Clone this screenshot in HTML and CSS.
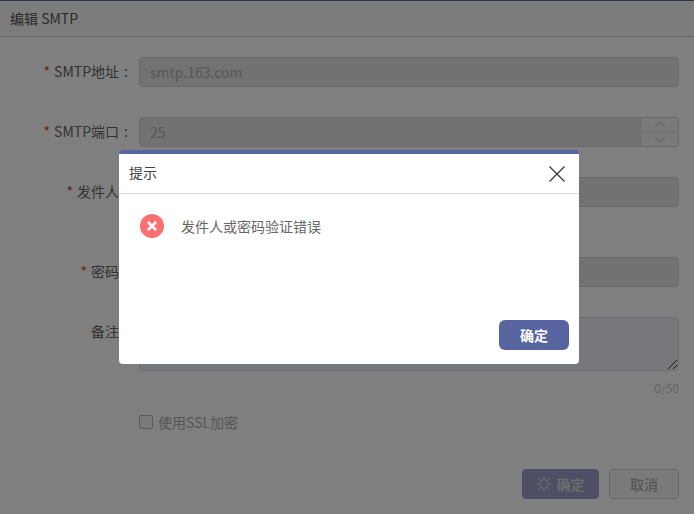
FILE: index.html
```html
<!DOCTYPE html>
<html lang="zh-CN">
<head>
    <meta charset="UTF-8">
    <title>编辑 SMTP</title>
    <link rel="stylesheet" href="styles.css">
</head>
<body>
    <div class="page">
        <div class="page-header">编辑 SMTP</div>
        <div class="form">
            <div class="row">
                <label class="label"><i>*</i>SMTP地址<b>:</b></label>
                <div class="input">smtp.163.com</div>
            </div>
            <div class="row">
                <label class="label"><i>*</i>SMTP端口<b>:</b></label>
                <div class="input number">25
                    <div class="spin">
                        <span><svg width="12" height="7" viewBox="0 0 12 7"><path d="M1 6l5-5 5 5" fill="none" stroke="#c4c4c4" stroke-width="1"/></svg></span>
                        <span><svg width="12" height="7" viewBox="0 0 12 7"><path d="M1 1l5 5 5-5" fill="none" stroke="#c4c4c4" stroke-width="1"/></svg></span>
                    </div>
                </div>
            </div>
            <div class="row">
                <label class="label"><i>*</i>发件人<b>:</b></label>
                <div class="input"></div>
            </div>
            <div class="row tall">
                <label class="label"><i>*</i>密码<b>:</b></label>
                <div class="input"></div>
            </div>
            <div class="row">
                <label class="label">备注<b>:</b></label>
                <div class="textarea">
                    <svg class="grip" width="9" height="9" viewBox="0 0 9 9"><path d="M0 9L9 0M5 9l4-4" fill="none" stroke="#333" stroke-width="1"/></svg>
                </div>
            </div>
            <div class="count">0/50</div>
            <div class="check"><span class="box"></span>使用SSL加密</div>
            <div class="actions">
                <button class="btn primary">
                    <svg width="14" height="14" viewBox="0 0 14 14"><path d="M7 0v4M7 10v4M0 7h4M10 7h4M2 2l3 3M9 9l3 3M12 2L9 5M5 9l-3 3" fill="none" stroke="#e0e0e0" stroke-width="1.2"/></svg>
                    确定
                </button>
                <button class="btn">取消</button>
            </div>
        </div>
    </div>

    <div class="mask"></div>

    <div class="dialog">
        <div class="dialog-header">
            <span class="dialog-title">提示</span>
            <svg width="16" height="16" viewBox="0 0 16 16"><path d="M.5.5l15 15M15.5.5l-15 15" fill="none" stroke="#333" stroke-width="1.2"/></svg>
        </div>
        <div class="dialog-body">
            <svg width="24" height="24" viewBox="0 0 24 24"><circle cx="12" cy="12" r="12" fill="#fa7070"/><path d="M8 8l8 8M16 8l-8 8" fill="none" stroke="#fff" stroke-width="2.6"/></svg>
            <span>发件人或密码验证错误</span>
        </div>
        <div class="dialog-footer">
            <button class="ok">确定</button>
        </div>
    </div>
</body>
</html>
```

FILE: styles.css
```css
* {
    box-sizing: border-box;
}
body {
    margin: 0;
    height: 514px;
    overflow: hidden;
    background-color: #fff;
    font-family: "Noto Sans CJK SC", "Noto Sans", sans-serif;
    font-size: 14px;
    color: #666;
}
.page-header {
    height: 37px;
    padding-left: 10px;
    line-height: 35px;
    border-top: 1px solid #5a669f;
    border-bottom: 1px solid #ccc;
    background-color: #f8f8f8;
    color: #555;
}
.form {
    padding: 20px 15px 0 0;
}
.row {
    display: flex;
    margin-bottom: 30px;
}
.row.tall {
    margin-top: 50px;
}
.label {
    width: 139px;
    flex-shrink: 0;
    line-height: 29px;
    text-align: right;
    color: #666;
}
.label i {
    margin-right: 4px;
    color: #e04040;
    font-style: normal;
}
.label b {
    display: inline-block;
    width: 20px;
    padding-left: 5px;
    text-align: left;
    font-weight: normal;
}
.input {
    position: relative;
    flex: 1;
    height: 30px;
    padding-left: 10px;
    line-height: 29px;
    border: 1px solid #d4d4d4;
    border-radius: 4px;
    background-color: #e4e4e4;
    color: #b0b0b0;
}
.spin {
    position: absolute;
    top: 0;
    right: 0;
    bottom: 0;
    width: 36px;
    display: flex;
    flex-direction: column;
    background-color: #f2f2f2;
    border-radius: 0 4px 4px 0;
}
.spin span {
    flex: 1;
    display: flex;
    align-items: center;
    justify-content: center;
}
.spin span:first-child {
    border-bottom: 1px solid #ddd;
}
.textarea {
    position: relative;
    flex: 1;
    height: 54px;
    border: 1px solid #ddd;
    border-radius: 4px;
    background-color: #eceef4;
}
.grip {
    position: absolute;
    right: 1px;
    bottom: 1px;
}
.count {
    margin-top: -21px;
    text-align: right;
    font-size: 12px;
    line-height: 16px;
    color: #c8c8c8;
}
.check {
    display: flex;
    align-items: center;
    margin: 16px 0 0 139px;
    line-height: 20px;
    color: #aaa;
}
.box {
    width: 14px;
    height: 14px;
    margin-right: 5px;
    border: 1px solid #b4b4b4;
    border-radius: 2px;
    background-color: #f4f4f4;
}
.actions {
    display: flex;
    justify-content: flex-end;
    gap: 10px;
    margin-top: 37px;
}
.btn {
    width: 70px;
    height: 30px;
    padding: 0;
    border: 1px solid #ccc;
    border-radius: 4px;
    background-color: #f5f5f5;
    color: #aaa;
    font: inherit;
    font-weight: 500;
}
.btn.primary {
    display: flex;
    align-items: center;
    justify-content: center;
    gap: 6px;
    width: 77px;
    border-color: #9aa0c8;
    background-color: #9aa0c8;
    color: #e0e0e0;
}
.mask {
    position: absolute;
    top: 0;
    left: 0;
    width: 100%;
    height: 100%;
    background-color: rgba(0, 0, 0, 0.5);
}
.dialog {
    position: absolute;
    top: 150px;
    left: 119px;
    width: 460px;
    height: 214px;
    border-top: 4px solid #5a669f;
    border-radius: 4px;
    background-color: #fff;
}
.dialog-header {
    display: flex;
    align-items: center;
    justify-content: space-between;
    height: 40px;
    padding: 0 14px 0 10px;
    border-bottom: 1px solid #d9d9d9;
    color: #444;
}
.dialog-title {
    margin-top: -3px;
}
.dialog-body {
    display: flex;
    align-items: center;
    gap: 17px;
    padding: 20px 0 0 21px;
    color: #666;
}
.dialog-footer {
    position: absolute;
    right: 10px;
    bottom: 14px;
}
.ok {
    width: 70px;
    height: 30px;
    padding: 0;
    border: none;
    border-radius: 6px;
    background-color: #57649f;
    color: #fff;
    font: inherit;
    font-weight: 700;
}
```
